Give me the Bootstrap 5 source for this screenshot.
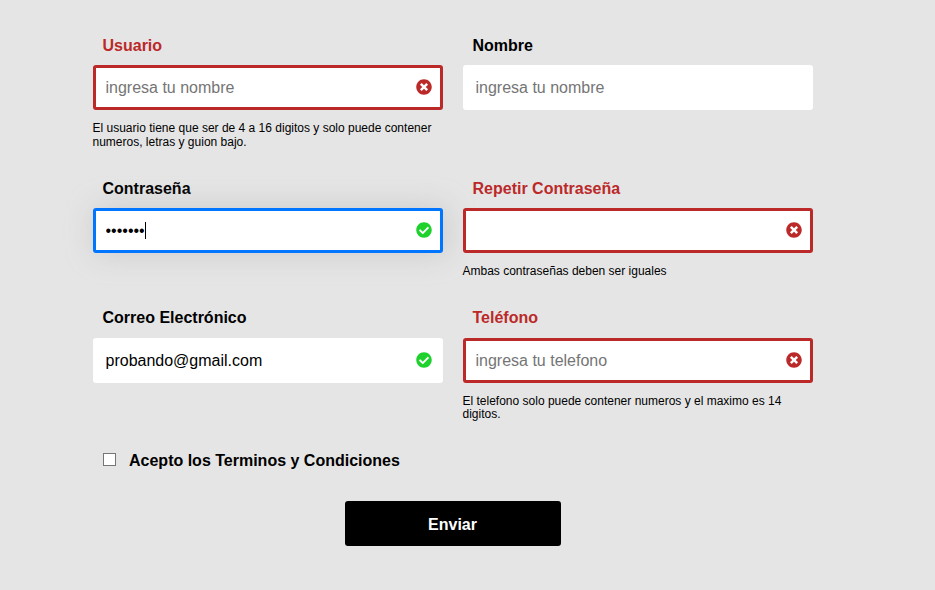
<!DOCTYPE html>
<html lang="es">
<head>
<meta charset="utf-8">
<meta name="viewport" content="width=device-width, initial-scale=1">
<title>Formulario</title>
<link href="https://cdn.jsdelivr.net/npm/bootstrap@5.3.0/dist/css/bootstrap.min.css" rel="stylesheet">
<style>
body{background:#e5e5e5;font-family:"Liberation Sans",Arial,sans-serif;color:#000;overflow:hidden}
.formulario{width:720px;margin-left:92.5px;padding-top:25px;display:grid;grid-template-columns:350px 350px;column-gap:20px;grid-template-rows:143px 130px 143px 60px auto}
.etiqueta{display:block;font-weight:700;font-size:16px;line-height:40px;padding:1px 0 0 10px;height:40px}
.ultima .etiqueta{padding-top:0}
.campo{height:45px;border:3px solid transparent;border-radius:3px;background:#fff;background-clip:border-box;padding:0 40px 0 10px;font-size:16px;line-height:45px;color:#000}
.campo::placeholder{color:#757575;opacity:1}
.campo:focus{border-color:#0075ff;box-shadow:3px 0 30px rgba(163,163,163,.4);outline:0;color:#000;caret-color:transparent}
.incorrecto .etiqueta{color:#bb2929}
.incorrecto .campo{border-color:#bb2929}
.icono{right:10.6px;top:14px;width:16px;height:16px;z-index:6}
.cursor{left:52.5px;top:14px;width:1px;height:17px;background:#000;z-index:6}
.ayuda{font-size:12px;line-height:13.8px;margin:12px 0 0}
.ultima .ayuda{line-height:13.4px}
.terminos{grid-column:1/-1;height:40px;margin-top:-1px;padding-top:1px}
.accion{grid-column:1/-1}
.casilla{appearance:none;width:13px;height:13px;margin:-3px 13.5px 0 10px;background:#fff;border:1px solid #767676;border-radius:0}
.enviar{width:216px;height:45px;background:#000;color:#fff;border-radius:3px;font-weight:700;font-size:16px;padding:2px 0 0}
.enviar:hover{background:#000;color:#fff}
</style>
<script src="https://cdn.jsdelivr.net/npm/bootstrap@5.3.0/dist/js/bootstrap.bundle.min.js"></script>
</head>
<body>
<svg class="d-none">
<symbol id="mal" viewBox="0 0 512 512"><path fill="#bb2929" d="M256 8C119 8 8 119 8 256s111 248 248 248 248-111 248-248S393 8 256 8zm121.600 313.100c4.700 4.700 4.700 12.300 0 17L338 377.600c-4.700 4.700-12.300 4.700-17 0L256 312l-65.100 65.600c-4.700 4.700-12.300 4.700-17 0L134.400 338c-4.700-4.700-4.700-12.300 0-17l65.600-65-65.600-65.100c-4.700-4.700-4.700-12.300 0-17l39.600-39.600c4.700-4.700 12.300-4.700 17 0l65 65.700 65.100-65.600c4.700-4.700 12.300-4.700 17 0l39.600 39.600c4.700 4.700 4.700 12.300 0 17L312 256l65.600 65.100z"/></symbol>
<symbol id="bien" viewBox="0 0 512 512"><path fill="#1ed12d" fill-rule="evenodd" d="M504 256c0 136.967-111.033 248-248 248S8 392.967 8 256 119.033 8 256 8s248 111.033 248 248zM227.314 387.314l184-184c6.248-6.248 6.248-16.379 0-22.627l-22.627-22.627c-6.248-6.249-16.379-6.249-22.628 0L216 308.118l-70.059-70.059c-6.248-6.248-16.379-6.248-22.628 0l-22.627 22.627c-6.248 6.248-6.248 16.379 0 22.627l104 104c6.249 6.249 16.379 6.249 22.628.001z"/></symbol>
</svg>
<form class="formulario" onsubmit="return false">
<div class="incorrecto"><label class="etiqueta" for="usuario">Usuario</label>
<div class="position-relative"><input class="campo form-control" id="usuario" placeholder="ingresa tu nombre"><svg class="icono position-absolute"><use href="#mal"/></svg></div>
<p class="ayuda">El usuario tiene que ser de 4 a 16 digitos y solo puede contener numeros, letras y guion bajo.</p></div>
<div><label class="etiqueta" for="nombre">Nombre</label>
<input class="campo form-control" id="nombre" placeholder="ingresa tu nombre"></div>
<div><label class="etiqueta" for="clave">Contraseña</label>
<div class="position-relative"><input class="campo form-control" type="password" id="clave" value="1234567" autofocus><span class="cursor position-absolute"></span><svg class="icono position-absolute"><use href="#bien"/></svg></div></div>
<div class="incorrecto"><label class="etiqueta" for="clave2">Repetir Contraseña</label>
<div class="position-relative"><input class="campo form-control" type="password" id="clave2"><svg class="icono position-absolute"><use href="#mal"/></svg></div>
<p class="ayuda">Ambas contraseñas deben ser iguales</p></div>
<div class="ultima"><label class="etiqueta" for="correo">Correo Electrónico</label>
<div class="position-relative"><input class="campo form-control" type="email" id="correo" value="probando@gmail.com"><svg class="icono position-absolute"><use href="#bien"/></svg></div></div>
<div class="incorrecto ultima"><label class="etiqueta" for="telefono">Teléfono</label>
<div class="position-relative"><input class="campo form-control" id="telefono" placeholder="ingresa tu telefono"><svg class="icono position-absolute"><use href="#mal"/></svg></div>
<p class="ayuda">El telefono solo puede contener numeros y el maximo es 14 digitos.</p></div>
<label class="terminos d-flex align-items-center fw-bold"><input class="casilla" type="checkbox">Acepto los Terminos y Condiciones</label>
<div class="accion text-center"><button class="btn enviar">Enviar</button></div>
</form>
</body>
</html>
